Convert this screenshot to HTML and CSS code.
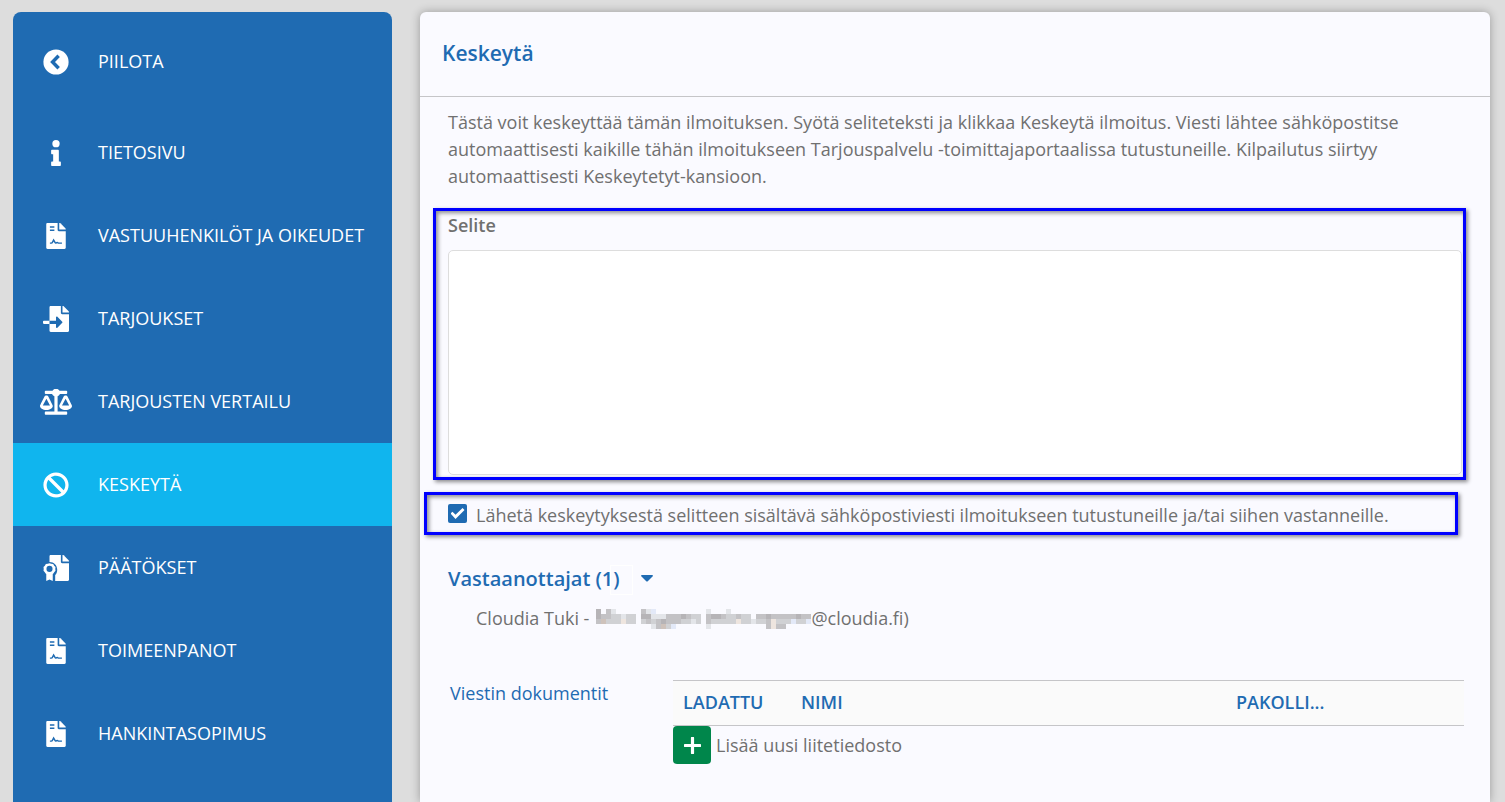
FILE: index.html
```html
<!DOCTYPE html>
<html lang="fi">
<head>
<meta charset="utf-8">
<title>Keskeytä</title>
<link rel="stylesheet" href="styles.css">
</head>
<body>
<svg class="sprite" aria-hidden="true">
  <symbol id="doc" viewBox="0 0 384 512">
    <path d="M224 136V0H24C10.700 0 0 10.700 0 24v464c0 13.300 10.700 24 24 24h336c13.300 0 24-10.700 24-24V160H248c-13.200 0-24-10.800-24-24z"/>
    <path d="M377 105L279 7c-4.500-4.500-10.600-7-17-7h-6v128h128v-6c0-6.300-2.500-12.400-7-17z"/>
    <path class="cut" d="M72 80h88M72 144h88M72 396h28c12 0 17-5 21-14l24-48 30 54c5 10 17 11 24 2 8-10 25-10 33 2 5 5 10 4 17 4h60"/>
  </symbol>
  <symbol id="import" viewBox="0 0 512 512">
    <path d="M16 288c-8.800 0-16 7.200-16 16v32c0 8.800 7.200 16 16 16h112v-64H16zm489-183L407.100 7c-4.500-4.500-10.600-7-17-7H384v128h128v-6.100c0-6.300-2.500-12.400-7-16.900zm-153 31V0H152c-13.300 0-24 10.700-24 24v264h128v-65.200c0-14.300 17.300-21.400 27.400-11.300L379 308c6.600 6.700 6.600 17.400 0 24l-95.700 96.400c-10.100 10.100-27.400 3-27.400-11.300V352H128v136c0 13.300 10.700 24 24 24h336c13.300 0 24-10.700 24-24V160H376c-13.200 0-24-10.800-24-24z"/>
  </symbol>
</svg>
<div class="layout">
  <nav class="sidebar" aria-label="Ilmoituksen osiot">
    <button type="button" class="item item-toggle">
      <svg class="icon" viewBox="0 0 512 512"><circle cx="256" cy="256" r="248"/><path class="chevron" d="M308 132L188 256l120 124"/></svg>
      <span>PIILOTA</span>
    </button>
    <a class="item" href="#tietosivu">
      <svg class="icon" viewBox="0 0 192 512"><path d="M20 424h20V280H20c-11 0-20-9-20-20v-48c0-11 9-20 20-20h112c11 0 20 9 20 20v212h20c11 0 20 9 20 20v48c0 11-9 20-20 20H20c-11 0-20-9-20-20v-48c0-11 9-20 20-20z"/><circle cx="96" cy="72" r="72"/></svg>
      <span>TIETOSIVU</span>
    </a>
    <a class="item" href="#vastuuhenkilot"><svg class="icon"><use href="#doc"/></svg><span>VASTUUHENKILÖT JA OIKEUDET</span></a>
    <a class="item" href="#tarjoukset"><svg class="icon"><use href="#import"/></svg><span>TARJOUKSET</span></a>
    <a class="item" href="#vertailu">
      <svg class="icon" viewBox="0 0 640 512">
        <path d="M112 32h138a80 80 0 0 1 140 0h138c9 0 16 7 16 16v32c0 9-7 16-16 16H397c-7 18-20 36-45 46v306h176c9 0 16 7 16 16v32c0 9-7 16-16 16H112c-9 0-16-7-16-16v-32c0-9 7-16 16-16h176V142c-25-10-38-28-45-46H112c-9 0-16-7-16-16V48c0-9 7-16 16-16z"/>
        <path fill-rule="evenodd" d="M256 336c0 44-57 80-128 80S0 380 0 336c0-16-1-9 85-182 18-36 69-36 86 0 85 171 85 167 85 182zM128 192L56 328h144zM640 336c0 44-57 80-128 80s-128-36-128-80c0-16-1-9 85-182 18-36 69-36 86 0 85 171 85 167 85 182zM512 192l-72 136h144z"/>
      </svg>
      <span>TARJOUSTEN VERTAILU</span>
    </a>
    <a class="item item-active" href="#keskeyta" aria-current="page">
      <svg class="icon" viewBox="0 0 512 512"><path d="M256 8C119 8 8 119 8 256s111 248 248 248 248-111 248-248S393 8 256 8zm130 118c65 65 70 165 21 235L151 105c70-49 170-44 235 21zM126 386c-65-65-70-165-21-235l256 256c-70 49-170 44-235-21z"/></svg>
      <span>KESKEYTÄ</span>
    </a>
    <a class="item" href="#paatokset">
      <svg class="icon" viewBox="0 0 512 512">
        <path d="M352 136V0H152c-13 0-24 11-24 24v112c88 0 152 66 152 152 0 48-18 84-40 108v116h248c13 0 24-11 24-24V160H376c-13 0-24-11-24-24z"/>
        <path d="M505 105L407 7c-5-5-11-7-17-7h-6v128h128v-6c0-6-2-12-7-17z"/>
        <path fill-rule="evenodd" d="M128 160l35 14 37 4 20 32 26 27-4 37 4 37-26 27-20 32-8 4v138l-64-32-64 32V374l-8-4-20-32-26-27 4-37-4-37 26-27 20-32 37-4zM128 214a60 60 0 1 0 0 120 60 60 0 0 0 0-120z"/>
      </svg>
      <span>PÄÄTÖKSET</span>
    </a>
    <a class="item" href="#toimeenpanot"><svg class="icon"><use href="#doc"/></svg><span>TOIMEENPANOT</span></a>
    <a class="item" href="#hankintasopimus"><svg class="icon"><use href="#doc"/></svg><span>HANKINTASOPIMUS</span></a>
  </nav>

  <main class="panel">
    <header class="panel-head"><h1>Keskeytä</h1></header>
    <p class="intro">Tästä voit keskeyttää tämän ilmoituksen. Syötä seliteteksti ja klikkaa Keskeytä ilmoitus. Viesti lähtee sähköpostitse automaattisesti kaikille tähän ilmoitukseen Tarjouspalvelu -toimittajaportaalissa tutustuneille. Kilpailutus siirtyy automaattisesti Keskeytetyt-kansioon.</p>

    <div class="marked field">
      <label for="selite">Selite</label>
      <textarea id="selite"></textarea>
    </div>

    <div class="marked consent">
      <input type="checkbox" id="laheta" checked>
      <label for="laheta">Lähetä keskeytyksestä selitteen sisältävä sähköpostiviesti ilmoitukseen tutustuneille ja/tai siihen vastanneille.</label>
    </div>

    <section class="recipients">
      <h2><button type="button" class="expander" aria-expanded="true"><span class="count">Vastaanottajat (1)</span><svg class="caret" viewBox="0 0 12 7"><path d="M1 0h10q1 0 1 1L7 6q-1 1-2 0L0 1q0-1 1-1z"/></svg></button></h2>
      <p class="recipient">
        <span>Cloudia Tuki -</span>
        <svg class="redacted" viewBox="0 0 43 4" preserveAspectRatio="none" shape-rendering="crispEdges" aria-hidden="true">
          <path fill="#b6b4b7" d="M0 0h1v2h-1zM9 1h2v1h-2zM13 2h1v1h-1zM17 1h1v1h-1zM23 1h2v1h-2zM34 1h1v1h-1zM40 1h1v1h-1z"/>
          <path fill="#c3c2c5" d="M1 1h2v1h-2zM0 2h1v1h-1zM2 0h1v1h-1zM9 0h1v1h-1zM10 2h1v1h-1zM12 2h1v1h-1zM14 1h3v2h-3zM18 1h1v1h-1zM22 1h1v2h-1zM25 1h1v1h-1zM28 1h1v1h-1zM32 1h2v1h-2zM35 1h5v1h-5zM34 2h1v2h-1zM36 3h2v1h-2zM12 3h1v1h-1zM41 1h2v1h-2z"/>
          <path fill="#d0d1d4" d="M2 2h3v1h-3zM3 1h2v1h-2zM6 1h2v2h-2zM9 2h1v1h-1zM11 2h1v1h-1zM17 2h2v1h-2zM19 1h2v1h-2zM20 2h1v1h-1zM23 2h4v1h-4zM26 1h2v1h-2zM27 2h1v1h-1zM29 2h2v1h-2zM29 1h2v1h-2zM32 2h2v1h-2zM36 2h3v1h-3zM40 2h2v1h-2zM14 3h1v1h-1z"/>
          <path fill="#e3e5e9" d="M3 0h1v1h-1zM5 1h1v1h-1zM10 0h1v1h-1zM11 1h3v1h-3zM19 2h1v1h-1zM22 0h1v1h-1zM22 3h1v1h-1zM26 0h1v1h-1zM31 2h1v1h-1zM11 3h1v1h-1z"/>
          <path fill="#e3e9f8" d="M11 0h1v1h-1zM15 3h1v1h-1zM39 2h1v1h-1zM42 2h1v1h-1z"/>
          <path fill="#eee5df" d="M5 2h1v1h-1zM28 2h1v1h-1zM35 2h1v2h-1z"/>
          <path fill="#cec2bb" d="M1 2h1v1h-1zM13 3h1v1h-1z"/>
        </svg>
        <span>@cloudia.fi)</span>
      </p>
    </section>

    <section class="documents">
      <h3>Viestin dokumentit</h3>
      <div class="files">
        <table>
          <thead><tr><th class="col-loaded">LADATTU</th><th>NIMI</th><th class="col-required">PAKOLLI...</th></tr></thead>
        </table>
        <div class="add">
          <button type="button" id="add-file" aria-labelledby="add-label"><svg viewBox="0 0 16 16"><path d="M8 1v14M1 8h14"/></svg></button>
          <label for="add-file" id="add-label">Lisää uusi liitetiedosto</label>
        </div>
      </div>
    </section>
  </main>
</div>
</body>
</html>
```
FILE: styles.css
```css
* { box-sizing: border-box; }

body {
  margin: 0;
  background: #ddd;
  color: #707070;
  font: 18px/27px "Open Sans", sans-serif;
}

h1, h2, h3, p { margin: 0; }

button { font: inherit; border: 0; cursor: pointer; }

.sprite { position: absolute; width: 0; height: 0; }

.layout {
  display: grid;
  grid-template-columns: 379px minmax(0, 1fr);
  gap: 28px;
  min-height: 100vh;
  padding: 12px 15px 0 13px;
}

.sidebar {
  display: flex;
  flex-direction: column;
  background: #1f6bb2;
  border-radius: 8px 8px 0 0;
  color: #fff;
}

.item {
  display: grid;
  grid-template-columns: 32px 1fr;
  align-items: center;
  gap: 26px;
  height: 83px;
  padding: 0 20px 0 27px;
  background: none;
  color: inherit;
  text-align: left;
  text-decoration: none;
}

.item-toggle { height: 99px; }

.item-active { background: #10b5ee; }

.icon {
  width: 100%;
  height: 26px;
  fill: #fff;
}

.cut {
  fill: none;
  stroke: #1f6bb2;
  stroke-width: 28;
}

.chevron {
  fill: none;
  stroke: #1f6bb2;
  stroke-width: 68;
}

.panel {
  background: #fafaff;
  border-radius: 6px 6px 0 0;
  box-shadow: 0 0 10px rgba(0, 0, 0, 0.3);
}

.panel-head {
  padding: 26px 22px 28px;
  border-bottom: 1px solid #c5c5c8;
}

h1 {
  color: #1f6bb2;
  font-size: 21px;
  line-height: 30px;
  font-weight: 600;
}

.intro { padding: 12px 28px 18px; }

.marked {
  border: 3px solid #00f;
  box-shadow: 2px 2px 4px rgba(0, 0, 0, 0.45), inset 2px 2px 4px rgba(0, 0, 0, 0.45);
}

.field {
  margin: 0 24px 0 13px;
  padding: 1px 1px 2px 12px;
}

.field label {
  display: block;
  font-weight: 600;
}

textarea {
  display: block;
  width: 100%;
  height: 225px;
  margin-top: 11px;
  padding: 8px;
  border: 1px solid #ddd;
  border-radius: 5px;
  background: #fff;
  color: inherit;
  font: inherit;
  resize: none;
}

.consent {
  display: flex;
  align-items: flex-start;
  gap: 9px;
  margin: 12px 32px 0 4px;
  padding: 7px 21px 3px;
}

.consent input {
  appearance: none;
  display: grid;
  place-items: center;
  width: 19px;
  height: 19px;
  margin: 2px 0 0;
  border-radius: 2px;
  background: #1f6bb2;
}

.consent input::before {
  content: "";
  width: 14px;
  height: 11px;
  background: #fff;
  clip-path: polygon(0 50%, 14% 34%, 36% 62%, 86% 0, 100% 18%, 36% 100%);
}

.recipients { padding: 30px 28px 0; }

h2 {
  font-size: 20px;
  line-height: 27px;
  font-weight: 600;
}

.expander {
  display: flex;
  align-items: center;
  gap: 21px;
  padding: 0;
  background: none;
  color: #1f6bb2;
}

.count { position: relative; }

.count::after {
  content: "";
  position: absolute;
  top: 0;
  right: -13px;
  width: 21px;
  height: 28px;
  border: 1px solid #fff;
}

.caret {
  width: 12px;
  height: 7px;
  fill: #1f6bb2;
}

.recipient {
  display: flex;
  align-items: center;
  padding: 13px 28px 0;
}

.redacted {
  width: 215px;
  height: 20px;
  margin-left: 7px;
}

.documents {
  display: grid;
  grid-template-columns: 223px minmax(0, 1fr);
  padding: 48px 26px 0 30px;
}

h3 {
  color: #1f6bb2;
  font-size: 18px;
  font-weight: 400;
}

table {
  width: 100%;
  table-layout: fixed;
  border-collapse: collapse;
  background: #fafafa;
}

th {
  padding: 7px 10px 9px;
  border-top: 1px solid #c5c5c8;
  border-bottom: 1px solid #c5c5c8;
  color: #1f6bb2;
  font-weight: 600;
  line-height: 28px;
  text-align: left;
}

.col-loaded { width: 118px; }

.col-required { width: 238px; }

.add {
  display: flex;
  align-items: center;
  gap: 5px;
}

.add button {
  display: grid;
  place-items: center;
  width: 38px;
  height: 38px;
  padding: 0;
  border-radius: 4px;
  background: #00864b;
}

.add svg {
  width: 17px;
  height: 17px;
  fill: none;
  stroke: #fff;
  stroke-width: 3;
  stroke-linecap: round;
}
```
